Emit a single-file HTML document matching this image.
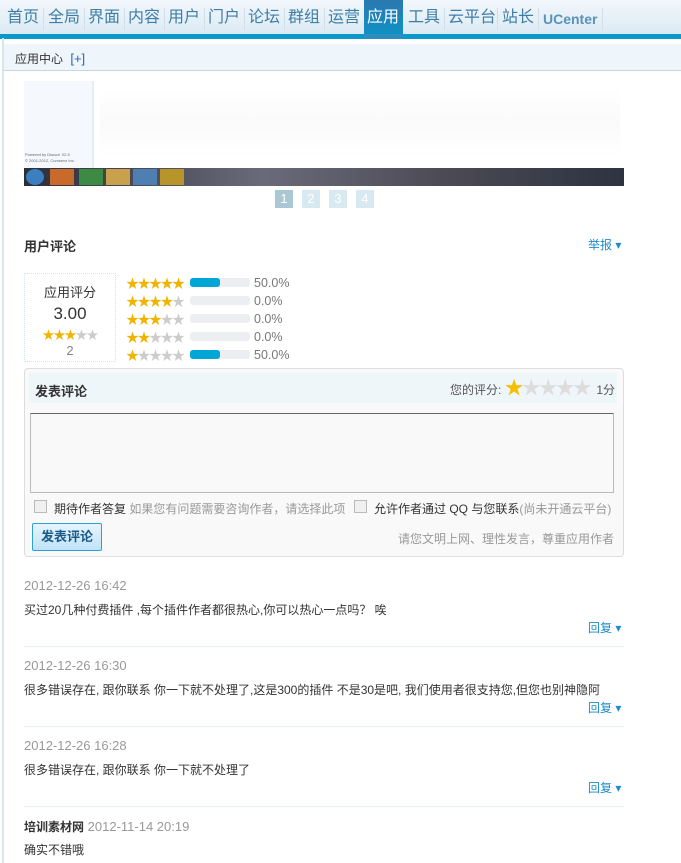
<!DOCTYPE html>
<html><head><meta charset="utf-8"><style>
*{margin:0;padding:0;box-sizing:border-box}
body{width:681px;height:863px;overflow:hidden;background:#fff;font:12px "Liberation Sans","Noto Sans CJK SC",sans-serif;color:#333;position:relative}
.nav{position:absolute;left:0;top:0;width:681px;height:34px;background:linear-gradient(#f2f7fb,#dceaf4)}
.nav span{position:absolute;top:9px;font-size:16px;color:#3d7ea6;line-height:18px}
.nav .sep{position:absolute;top:8px;width:1px;height:22px;background:#cfe0ec}
.act{position:absolute;left:364px;top:0;width:39px;height:38px;background:linear-gradient(#2a78b0,#0d93c7)}
.bar{position:absolute;left:0;top:34px;width:681px;height:5px;background:#0b99cc}
.sub{position:absolute;left:3px;top:44px;width:678px;height:27px;background:#eef6fb;border-bottom:1px solid #c3d7e4}
.lb{position:absolute;left:2px;top:38px;width:2px;height:825px;background:#d4e6f2}
.abs{position:absolute}
.pg{position:absolute;top:190px;width:18px;height:18px;background:#d8e9f1;color:#fff;text-align:center;line-height:18px;font-size:13px}
.bartrack{position:absolute;left:190px;width:60px;height:9px;background:#edeef2;border-radius:3px}
.fill{height:9px;width:30px;background:#00a6d6;border-radius:3px}
.hr{position:absolute;left:24px;width:600px;height:1px;background:#e5eef3}
.gray{color:#999}
.blue{color:#1f8bc9}
</style></head><body>
<div class="nav">
<span style="left:7px">首页</span><div class="sep" style="left:43px"></div>
<span style="left:48px">全局</span><div class="sep" style="left:84px"></div>
<span style="left:88px">界面</span><div class="sep" style="left:124px"></div>
<span style="left:128px">内容</span><div class="sep" style="left:164px"></div>
<span style="left:168px">用户</span><div class="sep" style="left:204px"></div>
<span style="left:208px">门户</span><div class="sep" style="left:244px"></div>
<span style="left:248px">论坛</span><div class="sep" style="left:284px"></div>
<span style="left:288px">群组</span><div class="sep" style="left:324px"></div>
<span style="left:328px">运营</span>
<span style="left:408px">工具</span><div class="sep" style="left:444px"></div>
<span style="left:448px">云平台</span><div class="sep" style="left:497px"></div>
<span style="left:502px">站长</span><div class="sep" style="left:538px"></div>
<span style="left:543px;font-size:14px;font-weight:bold;top:10px;color:#5a93b8">UCenter</span><div class="sep" style="left:602px"></div>
</div>
<div class="act"></div>
<span class="abs" style="left:367px;top:9px;font-size:16px;color:#fff;line-height:18px">应用</span>
<div class="bar"></div>
<div class="abs" style="left:364px;top:34px;width:39px;height:5px;background:#2a8fc0"></div>
<div class="sub"></div>
<div class="abs" style="left:15px;top:50px;font-size:12px;color:#333">应用中心 <span style="color:#2266bb;margin-left:4px;font-size:13px">[+]</span></div>
<div class="lb"></div>

<div class="abs" style="left:24px;top:81px;width:600px;height:105px;background:#fff"></div>
<div class="abs" style="left:24px;top:81px;width:70px;height:88px;background:#f5f9fd;border-right:2px solid #e3edf7"></div>
<div class="abs" style="left:25px;top:152px;font-size:4px;color:#666;line-height:6px">Powered by Discuz! X2.5<br>© 2001-2012, Comsenz Inc.</div>
<div class="abs" style="left:100px;top:88px;width:520px;height:70px;background:linear-gradient(#fff,#fafafa 50%,#fff)"></div>
<div class="abs" style="left:24px;top:168px;width:600px;height:18px;background:linear-gradient(90deg,#2a2f3a,#6b6a7a 40%,#4c4a55 70%,#2d3340)"></div>
<div class="abs" style="left:26px;top:169px;width:18px;height:16px;border-radius:50%;background:#3b7fc0"></div>
<div class="abs" style="left:50px;top:169px;width:24px;height:16px;background:#c86a2a"></div>
<div class="abs" style="left:79px;top:169px;width:24px;height:16px;background:#3d8a44"></div>
<div class="abs" style="left:106px;top:169px;width:24px;height:16px;background:#c9a04b"></div>
<div class="abs" style="left:133px;top:169px;width:24px;height:16px;background:#4f7fb0"></div>
<div class="abs" style="left:160px;top:169px;width:24px;height:16px;background:#b8952a"></div>
<div class="pg" style="left:275px;background:#aac7d4">1</div>
<div class="pg" style="left:302px">2</div>
<div class="pg" style="left:329px">3</div>
<div class="pg" style="left:356px">4</div>

<div class="abs" style="left:24px;top:236px;font-size:13px;font-weight:bold;color:#333">用户评论</div>
<div class="abs blue" style="left:588px;top:236px">举报 ▾</div>

<div class="abs" style="left:24px;top:273px;width:92px;height:89px;border:1px dotted #d4e4ee;text-align:center">
<div style="margin-top:8px;font-size:13px">应用评分</div>
<div style="font-size:17px;margin-top:3px">3.00</div>
<div style="margin-top:2px;color:#f0b400;font-size:12px;letter-spacing:-1px">★★★<span style="color:#ccc">★★</span></div>
<div style="color:#888;font-size:13px">2</div>
</div>

<div class="abs" style="left:126px;top:275px;line-height:18px;font-size:13px;letter-spacing:-1.5px;color:#f0b400">
<div>★★★★★</div><div>★★★★<span style="color:#ccc">★</span></div><div>★★★<span style="color:#ccc">★★</span></div><div>★★<span style="color:#ccc">★★★</span></div><div>★<span style="color:#ccc">★★★★</span></div>
</div>
<div class="bartrack" style="top:278px"><div class="fill"></div></div>
<div class="bartrack" style="top:296px"></div>
<div class="bartrack" style="top:314px"></div>
<div class="bartrack" style="top:332px"></div>
<div class="bartrack" style="top:350px"><div class="fill"></div></div>
<div class="abs" style="left:254px;top:274px;line-height:18px;color:#777;font-size:12.5px">50.0%<br>0.0%<br>0.0%<br>0.0%<br>50.0%</div>

<div class="abs" style="left:24px;top:368px;width:600px;height:189px;border:1px solid #ddd;border-radius:4px;background:#f9f9f9"></div>
<div class="abs" style="left:29px;top:373px;width:588px;height:30px;background:#eff6fa"></div>
<div class="abs" style="left:35px;top:381px;font-size:13px;font-weight:bold">发表评论</div>
<div class="abs" style="left:450px;top:381px;color:#555">您的评分: <span style="color:#f5be00;font-size:19px;line-height:14px;letter-spacing:-2px">★<span style="color:#ddd">★★★★</span></span>&nbsp; 1分</div>
<div class="abs" style="left:30px;top:413px;width:584px;height:80px;border:1px solid #bbb;border-top-color:#666;background:#f9f9f9"></div>
<div class="abs" style="left:34px;top:500px;width:13px;height:13px;border:1px solid #bbb;background:#f0f0f0"></div>
<div class="abs" style="left:54px;top:500px;color:#333">期待作者答复 <span class="gray">如果您有问题需要咨询作者，请选择此项</span></div>
<div class="abs" style="left:354px;top:500px;width:13px;height:13px;border:1px solid #bbb;background:#f0f0f0"></div>
<div class="abs" style="left:374px;top:500px;color:#333">允许作者通过 QQ 与您联系<span class="gray">(尚未开通云平台)</span></div>
<div class="abs" style="left:32px;top:523px;width:70px;height:28px;border:1px solid #2fa0d6;border-radius:2px;background:linear-gradient(#e7f5fd,#bfe3f8);color:#1a5a8a;font-weight:bold;font-size:13px;text-align:center;line-height:26px">发表评论</div>
<div class="abs gray" style="left:398px;top:530px">请您文明上网、理性发言，尊重应用作者</div>

<div class="abs gray" style="left:24px;top:578px;font-size:13px">2012-12-26 16:42</div>
<div class="abs" style="left:24px;top:601px">买过20几种付费插件 ,每个插件作者都很热心,你可以热心一点吗？ 唉</div>
<div class="abs blue" style="left:588px;top:619px">回复 ▾</div>
<div class="hr" style="top:646px"></div>
<div class="abs gray" style="left:24px;top:658px;font-size:13px">2012-12-26 16:30</div>
<div class="abs" style="left:24px;top:681px">很多错误存在, 跟你联系 你一下就不处理了,这是300的插件 不是30是吧, 我们使用者很支持您,但您也别神隐阿</div>
<div class="abs blue" style="left:588px;top:699px">回复 ▾</div>
<div class="hr" style="top:726px"></div>
<div class="abs gray" style="left:24px;top:738px;font-size:13px">2012-12-26 16:28</div>
<div class="abs" style="left:24px;top:761px">很多错误存在, 跟你联系 你一下就不处理了</div>
<div class="abs blue" style="left:588px;top:779px">回复 ▾</div>
<div class="hr" style="top:806px"></div>
<div class="abs" style="left:24px;top:818px;font-size:13px"><b style="color:#333;font-size:12px">培训素材网</b> <span class="gray">2012-11-14 20:19</span></div>
<div class="abs" style="left:24px;top:841px">确实不错哦</div>
</body></html>
